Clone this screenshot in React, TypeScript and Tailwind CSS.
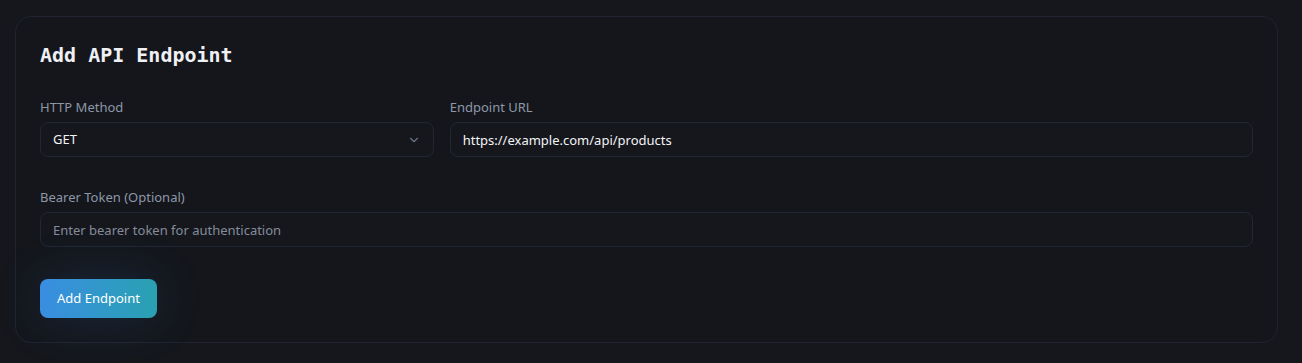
import { ChevronDown } from 'lucide-react';

const sans = "font-['Noto_Sans','Open_Sans',sans-serif]";

export default function App() {
  return (
    <div className={`min-h-[363px] bg-[#15171c] pt-4 ${sans}`}>
      <div className="ml-[15px] w-[1263px] rounded-2xl border border-[#1f2430] bg-[#14161b] px-6 pb-6 pt-6">
        <h2 className="font-['DejaVu_Sans_Mono',monospace] text-xl font-bold leading-7 text-[#eef0f4]">
          Add API Endpoint
        </h2>

        <div className="mt-7 grid grid-cols-3 gap-4">
          <div>
            <label className="mb-[5px] block text-[13px] leading-5 text-[#8e97a8]">HTTP Method</label>
            <div className="flex h-[35px] items-center justify-between rounded-lg border border-[#222734] bg-[#15171d] px-3 text-[13px] text-[#f3f4f6]">
              <span>GET</span>
              <ChevronDown className="h-3.5 w-3.5 text-[#6b7385]" strokeWidth={2} />
            </div>
          </div>
          <div className="col-span-2">
            <label className="mb-[5px] block text-[13px] leading-5 text-[#8e97a8]">Endpoint URL</label>
            <input
              className="h-[35px] w-full rounded-lg border border-[#222734] bg-[#15171d] px-3 text-[13px] text-[#f3f4f6] outline-none"
              defaultValue="https://example.com/api/products"
            />
          </div>
        </div>

        <div className="mt-[30px]">
          <label className="mb-[5px] block text-[13px] leading-5 text-[#8e97a8]">Bearer Token (Optional)</label>
          <input
            className="h-[35px] w-full rounded-lg border border-[#222734] bg-[#15171d] px-3 text-[13px] text-[#f3f4f6] outline-none placeholder:text-[#858c9a]"
            placeholder="Enter bearer token for authentication"
          />
        </div>

        <button
          type="button"
          className="mt-8 h-[39px] rounded-lg bg-gradient-to-r from-[#3a8de2] to-[#2aa1b1] px-[17px] text-[13px] text-white shadow-[0_0_50px_rgba(56,130,220,0.2)]"
        >
          Add Endpoint
        </button>
      </div>
    </div>
  );
}
